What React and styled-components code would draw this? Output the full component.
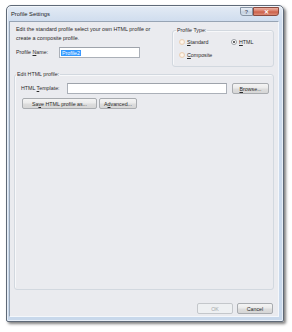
import styled, { createGlobalStyle } from 'styled-components'

const GlobalStyle = createGlobalStyle`
  html, body {
    margin: 0;
    padding: 0;
    background: #fff;
  }
  body {
    width: 292px;
    height: 332px;
    overflow: hidden;
    font-family: 'Liberation Sans', Arial, sans-serif;
    color: #2a2a2a;
  }
`

const Page = styled.div`
  padding: 5px 0 0 6px;
`

const Window = styled.div`
  box-sizing: border-box;
  width: 278px;
  height: 317px;
  display: flex;
  flex-direction: column;
  padding: 0 4px 4px 2px;
  border: 1px solid #5f6a78;
  border-radius: 5px 5px 2px 2px;
  background: linear-gradient(to bottom, #e3ebf5 0px, #d0ddee 15px, #c8d8eb 100%);
  box-shadow: 2px 2px 3px rgba(0, 0, 0, 0.5), inset 0 0 0 1px rgba(255, 255, 255, 0.55);
`

const TitleBar = styled.div`
  height: 15px;
  display: flex;
  align-items: flex-start;
  justify-content: space-between;
`

const Title = styled.span`
  padding: 5px 0 0 2px;
  font-size: 5.8px;
  line-height: 7px;
  color: #1c1c1c;
`

const Caption = styled.div`
  display: flex;
  margin-top: 1px;
`

const CaptionButton = styled.div`
  box-sizing: border-box;
  height: 9px;
  width: ${p => p.$w}px;
  display: flex;
  align-items: center;
  justify-content: center;
  font-size: 5.5px;
  font-weight: bold;
  border: 1px solid ${p => (p.$close ? '#8a4a3e' : '#8794a4')};
  border-radius: ${p => (p.$close ? '0 0 3px 0' : '0 0 0 3px')};
  color: ${p => (p.$close ? '#fff' : '#5b6370')};
  background: ${p =>
    p.$close
      ? 'linear-gradient(to bottom, #eab0a2 0%, #d97d68 45%, #cc5f48 55%, #dc8c77 100%)'
      : 'linear-gradient(to bottom, #e8eef6 0%, #d3dde9 45%, #c2d0e0 55%, #d6e0ec 100%)'};
`

const Client = styled.div`
  flex: 1;
  display: flex;
  flex-direction: column;
  padding: 0 4px 2px 4px;
  background: #eaebef;
  border: 1px solid #97a4b4;
  border-right-color: #f4f7fb;
  border-bottom-color: #f4f7fb;
`

const TopRow = styled.div`
  display: flex;
  justify-content: space-between;
`

const LeftCol = styled.div`
  padding: 3px 0 0 2px;
`

const Intro = styled.p`
  margin: 0;
  font-size: 5.4px;
  line-height: 9px;
`

const Row = styled.div`
  display: flex;
  align-items: center;
  margin-top: ${p => p.$mt || 0}px;
  padding-left: ${p => p.$pl || 0}px;
`

const Label = styled.span`
  width: ${p => p.$w}px;
  font-size: 5.3px;
  line-height: 9px;
  white-space: nowrap;
`

const TextBox = styled.div`
  box-sizing: border-box;
  width: ${p => p.$w}px;
  height: 11px;
  margin-right: ${p => p.$mr || 0}px;
  padding: 1px 0 0 1px;
  background: #fff;
  border: 1px solid #abb0b8;
  border-top-color: #9ea3ab;
  font-size: 5.3px;
  line-height: 8px;
`

const Selected = styled.span`
  background: #3399ff;
  color: #fff;
  padding: 0 1px;
`

const Group = styled.fieldset`
  box-sizing: border-box;
  margin: ${p => p.$m || 0};
  padding: 0;
  width: ${p => p.$w}px;
  height: ${p => p.$h}px;
  border: 1px solid #d2d8df;
  border-radius: 3px;
  box-shadow: inset 1px 1px 0 #f7f8fa;
`

const Legend = styled.legend`
  margin-left: ${p => p.$ml}px;
  padding: 0 1px;
  font-size: 5.3px;
  line-height: 7px;
`

const RadioGrid = styled.div`
  display: grid;
  grid-template-columns: 52px auto;
  grid-auto-rows: 8px;
  row-gap: 5px;
  margin: 4px 0 0 6px;
`

const RadioItem = styled.label`
  display: flex;
  align-items: center;
  gap: 2px;
  font-size: 5.3px;
`

const RadioCircle = styled.span`
  box-sizing: border-box;
  width: 6px;
  height: 6px;
  border-radius: 50%;
  display: flex;
  align-items: center;
  justify-content: center;
  border: 1px solid ${p => (p.$on ? '#9a9ea4' : '#eacfb3')};
  background: ${p => (p.$on ? '#fff' : 'radial-gradient(circle, #fffaf4 0%, #f8e6d2 100%)')};

  &::after {
    content: '';
    width: 2px;
    height: 2px;
    border-radius: 50%;
    background: ${p => (p.$on ? '#333' : 'transparent')};
  }
`

const Button = styled.div`
  box-sizing: border-box;
  width: ${p => p.$w}px;
  height: 11px;
  display: flex;
  align-items: center;
  justify-content: center;
  font-size: 5.3px;
  color: ${p => (p.$disabled ? '#a3a6aa' : '#2a2a2a')};
  border: 1px solid ${p => (p.$disabled ? '#c4c7cb' : '#a9acb0')};
  border-radius: 2px;
  background: ${p =>
    p.$disabled
      ? '#eef0f2'
      : 'linear-gradient(to bottom, #f4f4f4 0%, #ebebeb 45%, #dddddd 55%, #d6d6d6 100%)'};
`

const ButtonRow = styled.div`
  display: flex;
  gap: ${p => p.$gap}px;
  margin-top: ${p => p.$mt || 0}px;
  padding-left: ${p => p.$pl || 0}px;
`

const Footer = styled.div`
  display: flex;
  justify-content: flex-end;
  gap: 4px;
  margin-top: auto;
  padding-right: 1px;
`

const Radio = ({ on, children }) => (
  <RadioItem>
    <RadioCircle $on={on} />
    <span>{children}</span>
  </RadioItem>
)

const App = () => (
  <>
    <GlobalStyle />
    <Page>
      <Window>
        <TitleBar>
          <Title>Profile Settings</Title>
          <Caption>
            <CaptionButton $w={13}>?</CaptionButton>
            <CaptionButton $w={26} $close>✕</CaptionButton>
          </Caption>
        </TitleBar>
        <Client>
          <TopRow>
            <LeftCol>
              <Intro>
                Edit the standard profile select your own HTML profile or
                <br />
                create a composite profile.
              </Intro>
              <Row $mt={4}>
                <Label $w={43}>Profile <u>N</u>ame:</Label>
                <TextBox $w={81}><Selected>Profile2</Selected></TextBox>
              </Row>
            </LeftCol>
            <Group $w={102} $h={40} $m='5px 0 0 0'>
              <Legend $ml={3}>Profile Type:</Legend>
              <RadioGrid>
                <Radio><u>S</u>tandard</Radio>
                <Radio on><u>H</u>TML</Radio>
                <Radio><u>C</u>omposite</Radio>
              </RadioGrid>
            </Group>
          </TopRow>
          <Group $w={260} $h={219} $m='4px 0 0 0'>
            <Legend $ml={1}>Edit HTML profile:</Legend>
            <Row $mt={5} $pl={6}>
              <Label $w={46}>HTML <u>T</u>emplate:</Label>
              <TextBox $w={160} $mr={5} />
              <Button $w={37}><u>B</u>rowse...</Button>
            </Row>
            <ButtonRow $gap={2} $mt={4} $pl={7}>
              <Button $w={75}>Sa<u>v</u>e HTML profile as...</Button>
              <Button $w={38}>A<u>d</u>vanced...</Button>
            </ButtonRow>
          </Group>
          <Footer>
            <Button $w={36} $disabled>OK</Button>
            <Button $w={36}>Cancel</Button>
          </Footer>
        </Client>
      </Window>
    </Page>
  </>
)

export default App
